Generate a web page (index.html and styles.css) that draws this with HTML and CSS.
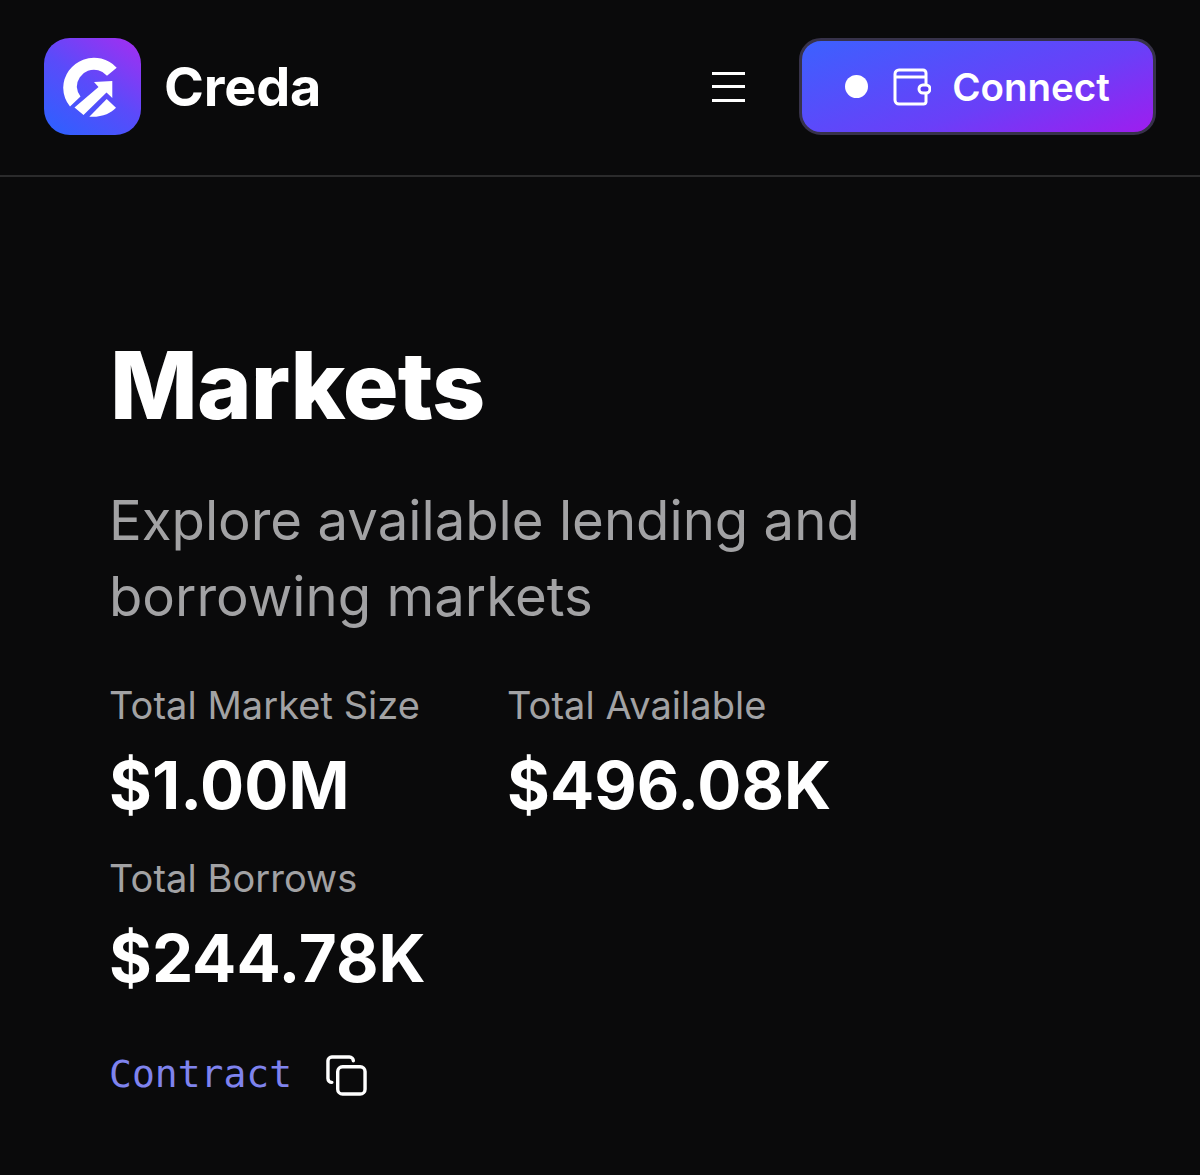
FILE: index.html
```html
<!DOCTYPE html>
<html lang="en">
<head>
<meta charset="UTF-8" />
<meta name="viewport" content="width=device-width, initial-scale=1" />
<title>Creda - Markets</title>
<link rel="stylesheet" href="styles.css">
</head>
<body>
  <header class="topbar">
    <div class="brand">
      <div class="logo">
        <svg viewBox="0 0 97 97" width="97" height="97" fill="#fff">
          <path d="M72.700 29.700A30.800 30.800 0 0 0 19.200 49.700A30.800 30.800 0 0 0 26 68.500L36.500 58.500A17.200 17.200 0 0 1 32.800 49A17.200 17.200 0 0 1 63 37.700Z" />
          <path d="M50 44L68.300 43V60L62.500 54.500L39.500 77L30.500 69.500L54.500 49Z" />
          <path d="M45.300 78.700L62.700 61L72 69.700C67 75 58 79.500 45.300 78.700Z" />
        </svg>
      </div>
      <span class="brand-name">Creda</span>
    </div>
    <div class="actions">
      <button class="menu-btn" aria-label="Menu">
        <span></span><span></span><span></span>
      </button>
      <button class="connect-btn">
        <span class="dot"></span>
        <svg class="wallet" viewBox="0 0 38 38" width="38" height="38" fill="none" stroke="#fff" stroke-width="3" stroke-linejoin="round">
          <path d="M6 2H30A3 3 0 0 1 33 5V34A2.500 2.500 0 0 1 30.500 36H6A4 4 0 0 1 2 32V6A4 4 0 0 1 6 2Z" />
          <path d="M2 9H33" />
          <rect x="26" y="17" width="11" height="8" rx="4" fill="#5a3cf5" />
        </svg>
        <span>Connect</span>
      </button>
    </div>
  </header>

  <main class="page">
    <h1>Markets</h1>
    <p class="subtitle">Explore available lending and<br>borrowing markets</p>

    <div class="stats">
      <div class="stat">
        <div class="stat-label">Total Market Size</div>
        <div class="stat-value">$1.00M</div>
      </div>
      <div class="stat">
        <div class="stat-label">Total Available</div>
        <div class="stat-value">$496.08K</div>
      </div>
      <div class="stat">
        <div class="stat-label">Total Borrows</div>
        <div class="stat-value">$244.78K</div>
      </div>
    </div>

    <div class="contract">
      <a href="#">Contract</a>
      <svg viewBox="0 0 42 42" width="41" height="41" fill="none" stroke="#fff" stroke-width="3.500" stroke-linecap="round" stroke-linejoin="round">
        <rect x="12" y="12" width="28" height="28" rx="5" />
        <path d="M6 28A4 4 0 0 1 2 24V6A4 4 0 0 1 6 2H24A4 4 0 0 1 28 6" />
      </svg>
    </div>
  </main>
</body>
</html>
```

FILE: styles.css
```css
* { box-sizing: border-box; }
html, body { margin: 0; padding: 0; }
body { font-family: Inter, "Liberation Sans", sans-serif; background: #0a0a0b; color: #fff; height: 1175px; overflow: hidden; }

.topbar { display: flex; align-items: center; justify-content: space-between; height: 177px; padding: 0 44px 2px; border-bottom: 2px solid #2b2b2c; }
.brand { display: flex; align-items: center; gap: 23px; }
.logo { width: 97px; height: 97px; border-radius: 26px; background: linear-gradient(35deg, #2a62ff 0%, #5a4bfa 50%, #a62df0 100%); }
.logo svg { display: block; }
.brand-name { font-size: 54px; font-weight: 700; letter-spacing: -0.200px; }

.actions { display: flex; align-items: center; gap: 54px; }
.menu-btn { display: flex; flex-direction: column; gap: 10.500px; width: 33px; padding: 0; background: none; border: 0; }
.menu-btn span { display: block; height: 3px; background: #fff; }
.connect-btn { display: flex; align-items: center; justify-content: center; gap: 24px; width: 357px; height: 97px; padding-right: 6px; border: 3px solid #37324a; border-radius: 22px; background: linear-gradient(160deg, #3a62ff 0%, #6a3ff8 60%, #a11bee 100%); background-origin: border-box; color: #fff; font-family: inherit; font-size: 38.500px; font-weight: 600; }
.dot { width: 23px; height: 23px; border-radius: 50%; background: #fff; }
.wallet { display: block; margin: 0 -3px 0 1px; }

.page { padding: 152px 0 0 109px; }
h1 { margin: 0 0 0 1px; font-size: 93px; line-height: 112px; font-weight: 800; letter-spacing: -0.800px; }
.subtitle { margin: 41px 0 0; font-size: 54.500px; line-height: 76px; color: #a2a2a4; }

.stats { display: grid; grid-template-columns: 398px auto; justify-content: start; row-gap: 30px; margin-top: 49px; }
.stat-label { font-size: 38px; line-height: 45px; color: #a2a2a4; letter-spacing: 0.050px; }
.stat-value { margin-top: 18px; font-size: 65.500px; line-height: 80px; font-weight: 700; }

.contract { display: flex; align-items: center; gap: 34px; margin-top: 53px; }
.contract a { font-family: "DejaVu Sans Mono", monospace; font-size: 38px; color: #7f83ee; text-decoration: none; }
.contract svg { display: block; margin-top: 3px; }
```
